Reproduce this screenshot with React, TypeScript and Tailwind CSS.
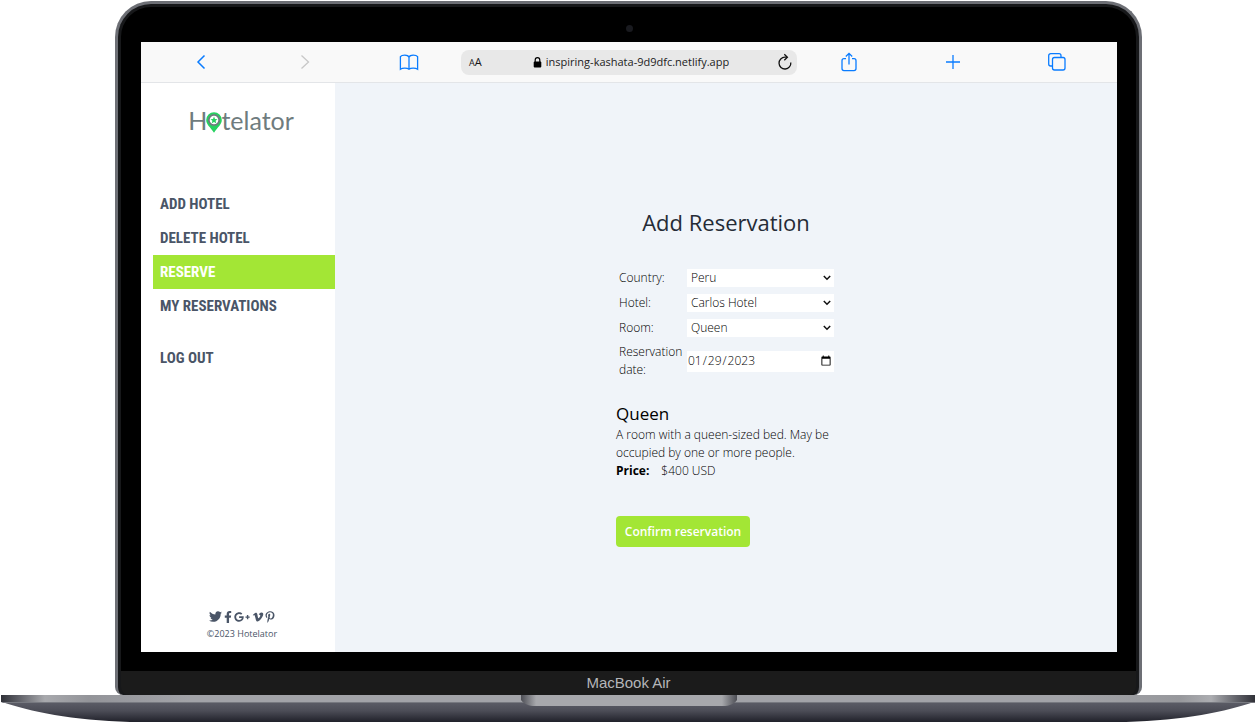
import { useState } from "react";
import type { ReactNode } from "react";
import { FaFacebookF, FaGooglePlusG, FaPinterestP, FaTwitter, FaVimeoV } from "react-icons/fa";

function ToolButton({ label, children, muted = false }: { label: string; children: ReactNode; muted?: boolean }) {
  return (
    <div className="flex flex-1 justify-center">
      <button type="button" aria-label={label} className={muted ? "text-[#c8c8c8]" : "text-[#0a7cff]"}>
        <svg width="20" height="20" viewBox="0 0 20 20" fill="none" stroke="currentColor" strokeWidth="1.3">
          {children}
        </svg>
      </button>
    </div>
  );
}

function BrowserBar() {
  return (
    <header className="flex h-[41px] shrink-0 items-center border-b border-[#e3e5e8] bg-[#f9f9f9] px-2">
      <ToolButton label="Back">
        <path d="M13.5 3.5 7 10l6.500 6.500" strokeWidth="1.500" />
      </ToolButton>
      <ToolButton label="Forward" muted>
        <path d="M6.500 3.500 13.500 10l-7 6.500" />
      </ToolButton>
      <ToolButton label="Bookmarks">
        <path d="M10 5.200C9.300 3.700 7.700 3.200 5.800 3.200S2.200 3.600 1.400 4.700v12.500c1.100-.7 2.600-1 4.400-1s3.200.2 4.200 1c1-.8 2.400-1 4.200-1s3.300.3 4.400 1V4.700c-.8-1.100-2.500-1.500-4.400-1.500S10.700 3.700 10 5.200Zm0 0v12" />
      </ToolButton>
      <div className="flex h-[25px] w-[336px] items-center justify-between rounded-lg bg-[#e8e8e8] pr-1 pl-2 text-[#161616]">
        <button type="button" aria-label="Text size" className="flex w-4 items-baseline leading-4">
          <span className="text-[9px]">A</span>
          <span className="text-[11px]">A</span>
        </button>
        <div className="flex items-center gap-1">
          <svg width="9" height="11" viewBox="0 0 9 11" aria-hidden="true">
            <rect x="0.700" y="4.500" width="7.600" height="6" rx="1" fill="#000" />
            <path d="M2.200 5V3a2.300 2.300 0 0 1 4.600 0v2" fill="none" stroke="#000" strokeWidth="1.200" />
          </svg>
          <input
            aria-label="Address"
            className="field-sizing-content h-5 bg-transparent text-[11px] leading-5 text-[#222] outline-none"
            defaultValue="inspiring-kashata-9d9dfc.netlify.app"
          />
        </div>
        <button type="button" aria-label="Reload">
          <svg width="16" height="18" viewBox="0 0 16 18" fill="none" stroke="#111" strokeWidth="1.300">
            <path d="M13.800 9.500A5.900 5.900 0 1 1 8 4.200h2" />
            <path d="M7.300 1.200 10.400 4.200 7.300 7.200" />
          </svg>
        </button>
      </div>
      <ToolButton label="Share">
        <path d="M7 6.700H5a2 2 0 0 0-2 2v7.900a2 2 0 0 0 2 2h10a2 2 0 0 0 2-2V8.700a2 2 0 0 0-2-2h-2M10 12.500V1.500M6.800 4.500 10 1.400l3.200 3.100" />
      </ToolButton>
      <ToolButton label="New tab">
        <path d="M10 3v14M3 10h14" />
      </ToolButton>
      <ToolButton label="Tabs">
        <rect x="5.500" y="5.500" width="12.500" height="12.500" rx="2" />
        <path d="M5.500 14H3.700a2 2 0 0 1-2-2V3.700a2 2 0 0 1 2-2h8.300a2 2 0 0 1 2 2v1.800" />
      </ToolButton>
    </header>
  );
}

function Logo() {
  return (
    <a href="#home" className="flex justify-center font-['Lato','Liberation_Sans',sans-serif] text-[25px] leading-8 text-[#6f7c7e]">
      <span>H</span>
      <span className="relative">
        <span className="text-transparent">o</span>
        <svg className="absolute top-[8px] left-1/2 -translate-x-1/2" width="16" height="21" viewBox="0 0 16 21">
          <path d="M8 .3a7.800 7.800 0 0 0-7.800 7.800c0 4.600 4 7 7.800 12.600 3.800-5.600 7.800-8 7.800-12.600A7.800 7.800 0 0 0 8 .3Z" fill="#27d160" />
          <circle cx="8" cy="8" r="5.200" fill="#fff" stroke="#6f7c7e" strokeWidth="1.800" />
          <path d="m8 4.600 1 2.400 2.500.2-1.900 1.600.6 2.500L8 9.900l-2.200 1.400.6-2.500-1.900-1.600L7 7Z" fill="#27d160" />
        </svg>
      </span>
      <span>telator</span>
    </a>
  );
}

const NAV = ["Add hotel", "Delete hotel", "Reserve", "My reservations"];
const SOCIAL = [
  { name: "Twitter", Icon: FaTwitter, size: 13, box: "w-[13px]" },
  { name: "Facebook", Icon: FaFacebookF, size: 12, box: "w-[12px]" },
  { name: "Google Plus", Icon: FaGooglePlusG, size: 16, box: "w-[17px]" },
  { name: "Vimeo", Icon: FaVimeoV, size: 12, box: "w-[14px]" },
  { name: "Pinterest", Icon: FaPinterestP, size: 12, box: "w-[11px]" },
];

function Sidebar() {
  return (
    <aside className="flex w-[194px] shrink-0 flex-col bg-white pt-[21px] pb-[11px] pl-3">
      <div className="pr-1.5">
        <Logo />
      </div>
      <nav className="mt-[51px] flex flex-col font-['Roboto_Condensed','Liberation_Sans_Narrow',sans-serif] text-[15px] leading-[34px] font-bold text-[#4a5567] uppercase">
        {NAV.map((item) => (
          <a key={item} href="#nav" className={item === "Reserve" ? "bg-[#a3e635] pl-[7px] text-white" : "pl-[7px]"}>
            {item}
          </a>
        ))}
        <a href="#logout" className="mt-[18px] pl-[7px]">
          Log out
        </a>
      </nav>
      <footer className="mt-auto flex flex-col items-center pr-1 text-[#4a5567]">
        <div className="flex h-[13px] items-center">
          {SOCIAL.map(({ name, Icon, size, box }) => (
            <a key={name} href="#social" aria-label={name} className={`flex justify-center ${box}`}>
              <Icon size={size} className="shrink-0" />
            </a>
          ))}
        </div>
        <p className="mt-1 text-[9px] leading-[14px]">©2023 Hotelator</p>
      </footer>
    </aside>
  );
}

function SelectRow({ id, label, options }: { id: string; label: string; options: string[] }) {
  return (
    <>
      <label htmlFor={id} className="pt-px">
        {label}
      </label>
      <div className="relative">
        <select id={id} className="block h-[18px] w-full appearance-none bg-white px-1 text-[12px] leading-[18px] text-black">
          {options.map((option) => (
            <option key={option}>{option}</option>
          ))}
        </select>
        <svg
          className="pointer-events-none absolute top-1.5 right-[3px]"
          width="8"
          height="6"
          viewBox="0 0 8 6"
          fill="none"
          stroke="#111"
          strokeWidth="1.500"
        >
          <path d="m.8 1 3.200 3.200L7.200 1" />
        </svg>
      </div>
    </>
  );
}

function Reservation() {
  const [date, setDate] = useState("2023-01-29");
  return (
    <main className="flex flex-1 flex-col items-center bg-[#f0f4f9] pt-[123px] text-black">
      <h1 className="mb-[30px] text-[22px] leading-8 text-[#252b36]">Add Reservation</h1>
      <form className="w-[220px] text-[12px] leading-[18px]" onSubmit={(event) => event.preventDefault()}>
        <div className="grid grid-cols-[62px_1fr] items-center gap-x-[6px] gap-y-[6px] pr-[2px] pl-[3px] font-light">
          <SelectRow id="country" label="Country:" options={["Peru"]} />
          <SelectRow id="hotel" label="Hotel:" options={["Carlos Hotel"]} />
          <SelectRow id="room" label="Room:" options={["Queen"]} />
          <label htmlFor="date">Reservation date:</label>
          <input
            id="date"
            type="date"
            value={date}
            onChange={(event) => setDate(event.target.value)}
            className="h-[21px] w-full bg-white text-[12px] text-black"
          />
        </div>
        <h2 className="mt-[23px] text-[17px] leading-6">Queen</h2>
        <p className="font-light">A room with a queen-sized bed. May be occupied by one or more people.</p>
        <p className="font-light">
          <strong className="mr-3 font-bold">Price:</strong>$400 USD
        </p>
        <button type="submit" className="mt-9 h-[31px] w-[134px] rounded bg-[#a3e635] font-semibold text-white">
          Confirm reservation
        </button>
      </form>
    </main>
  );
}

function LaptopBase() {
  return (
    <svg className="block h-[27px] w-full shrink-0" viewBox="0 0 1256 27" preserveAspectRatio="none" aria-hidden="true">
      <defs>
        <linearGradient id="edge">
          <stop offset="0" stopColor="#303138" />
          <stop offset=".015" stopColor="#62636a" />
          <stop offset=".035" stopColor="#a8a9ad" />
          <stop offset=".07" stopColor="#939499" />
          <stop offset=".15" stopColor="#a2a3a8" />
          <stop offset=".85" stopColor="#a2a3a8" />
          <stop offset=".94" stopColor="#97989c" />
          <stop offset=".965" stopColor="#acadb1" />
          <stop offset=".985" stopColor="#62636a" />
          <stop offset="1" stopColor="#303138" />
        </linearGradient>
        <linearGradient id="body" x2="0" y2="1">
          <stop offset="0" stopColor="#5d5e68" />
          <stop offset=".45" stopColor="#4c4d57" />
          <stop offset="1" stopColor="#20212a" />
        </linearGradient>
        <linearGradient id="notch">
          <stop offset="0" stopColor="#4d4e55" />
          <stop offset=".07" stopColor="#a7a8ac" />
          <stop offset=".93" stopColor="#a7a8ac" />
          <stop offset="1" stopColor="#4d4e55" />
        </linearGradient>
      </defs>
      <path d="M1 6.500C30 17 72 25 130 27h996c58-2 100-10 129-20.500Z" fill="url(#body)" />
      <path d="M1 0h1254v7H1Z" fill="url(#edge)" />
      <path d="M1 7h1254v1H3Z" fill="#777980" />
      <path d="M521 0h216v5c-3 4-8 6-14 6H535c-6 0-11-2-14-6Z" fill="url(#notch)" />
    </svg>
  );
}

export default function App() {
  return (
    <div className="flex min-h-screen flex-col bg-white pt-px font-['Open_Sans','Noto_Sans',sans-serif]">
      <div className="mr-[114px] ml-[115px] flex flex-1 flex-col overflow-hidden rounded-t-[36px] rounded-b-lg border-x-[3px] border-t-[3px] border-[#6d6f75] bg-[#17181a] px-[3px] pt-[3px]">
        <div className="flex flex-1 flex-col rounded-t-[30px] bg-black pr-[19px] pb-[19px] pl-[20px]">
          <div className="flex h-[35px] justify-center pt-[18px]">
            <div className="size-[7px] rounded-full bg-[#191a1f]" />
          </div>
          <div className="flex flex-1 flex-col">
            <BrowserBar />
            <div className="flex flex-1">
              <Sidebar />
              <Reservation />
            </div>
          </div>
        </div>
        <div className="flex h-[24px] items-center justify-center rounded-b-lg bg-[#1b1b1b] font-['Liberation_Sans',sans-serif] text-[15px] leading-6 text-[#b4b5b9]">
          MacBook Air
        </div>
      </div>
      <LaptopBase />
    </div>
  );
}
